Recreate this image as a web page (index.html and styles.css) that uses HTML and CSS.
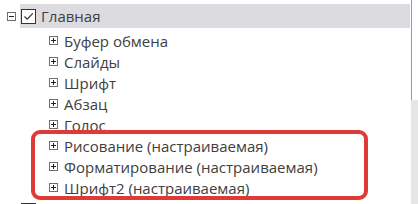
FILE: index.html
```html
<!DOCTYPE html>
<html lang="ru">
<head>
<meta charset="utf-8">
<link rel="stylesheet" href="styles.css">
</head>
<body>
<div class="view">
  <div class="tree">
    <div class="top-row">
      <span class="toggle minus"></span>
      <div class="top-content selected">
        <span class="check"><svg viewBox="0 0 15 15" width="15" height="15"><path d="M3.5 7.5 L6.2 10.2 L11.8 4.3" fill="none" stroke="#333" stroke-width="1.2"/></svg></span>
        <span class="label">Главная</span>
      </div>
    </div>
    <div class="children">
      <div class="row"><span class="toggle plus"></span><span class="label">Буфер обмена</span></div>
      <div class="row"><span class="toggle plus"></span><span class="label">Слайды</span></div>
      <div class="row"><span class="toggle plus"></span><span class="label">Шрифт</span></div>
      <div class="row"><span class="toggle plus"></span><span class="label">Абзац</span></div>
      <div class="row"><span class="toggle plus"></span><span class="label">Голос</span></div>
      <div class="row"><span class="toggle plus"></span><span class="label">Рисование (настраиваемая)</span></div>
      <div class="row"><span class="toggle plus"></span><span class="label">Форматирование (настраиваемая)</span></div>
      <div class="row"><span class="toggle plus"></span><span class="label">Шрифт2 (настраиваемая)</span></div>
    </div>
    <div class="top-row">
      <span class="toggle minus"></span>
      <div class="top-content">
        <span class="check"><svg viewBox="0 0 15 15" width="15" height="15"><path d="M3.5 7.5 L6.2 10.2 L11.8 4.3" fill="none" stroke="#333" stroke-width="1.2"/></svg></span>
        <span class="label">Вставка</span>
      </div>
    </div>
    <div class="highlight-box"></div>
  </div>
  <div class="scrollbar"><div class="thumb"></div></div>
</div>
</body>
</html>
```
FILE: styles.css
```css
html, body {
  margin: 0;
  padding: 0;
  background: #fff;
  overflow: hidden;
}
.view {
  width: 418px;
  height: 204px;
  display: flex;
  overflow: hidden;
}
.tree {
  position: relative;
  flex: 1;
  padding-top: 4px;
  font-family: "Open Sans", "Noto Sans", sans-serif;
  font-size: 15px;
  color: #404040;
}
.top-row {
  display: flex;
  align-items: center;
  height: 24px;
  padding-left: 7px;
}
.top-content {
  flex: 1;
  display: flex;
  align-items: center;
  height: 24px;
  margin-left: 4px;
  padding-left: 1px;
  margin-right: 1px;
}
.top-content.selected {
  background: #dcdce0;
}
.toggle {
  position: relative;
  width: 9px;
  height: 9px;
  box-sizing: border-box;
  border: 1px solid #6e6e6e;
  background: #fff;
  flex: none;
}
.toggle::before {
  content: "";
  position: absolute;
  left: 1px;
  top: 3px;
  width: 5px;
  height: 1px;
  background: #222;
}
.toggle.plus::after {
  content: "";
  position: absolute;
  left: 3px;
  top: 1px;
  width: 1px;
  height: 5px;
  background: #222;
}
.check {
  width: 15px;
  height: 15px;
  box-sizing: border-box;
  border: 1px solid #333;
  background: #fff;
  display: flex;
  flex: none;
}
.check svg {
  margin: -1px;
}
.top-content .label {
  margin-left: 5px;
}
.children {
  padding-top: 2px;
}
.row {
  display: flex;
  align-items: center;
  height: 21px;
  padding-left: 49px;
}
.row .label {
  margin-left: 6px;
  white-space: nowrap;
}
.highlight-box {
  position: absolute;
  left: 31px;
  top: 130px;
  width: 337px;
  height: 70px;
  box-sizing: border-box;
  border: 4px solid #e03a36;
  border-radius: 9px;
}
.scrollbar {
  width: 7px;
  flex: none;
  display: flex;
  flex-direction: column;
  background: #e6e6e6;
}
.thumb {
  height: 100px;
  border-left: 1px solid #9a9a9a;
  background: #fff;
}
```
